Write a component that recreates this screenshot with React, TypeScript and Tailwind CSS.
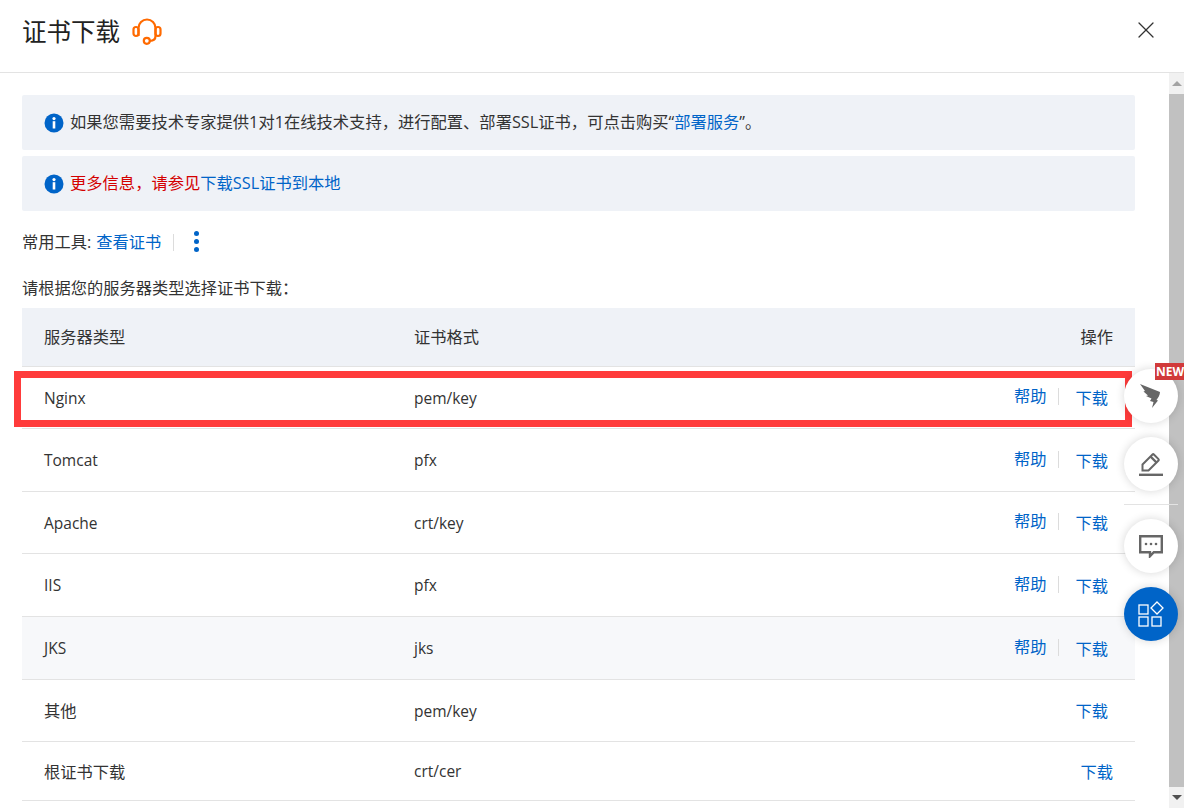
import { X } from 'lucide-react'

const rows = [
  { name: 'Nginx', format: 'pem/key', help: true, height: 'h-[62px]', nameSize: 'text-[15.5px]' },
  { name: 'Tomcat', format: 'pfx', help: true, height: 'h-[63px]', nameSize: 'text-[15.5px]' },
  { name: 'Apache', format: 'crt/key', help: true, height: 'h-[62px]', nameSize: 'text-[15.5px]' },
  { name: 'IIS', format: 'pfx', help: true, height: 'h-[63px]', nameSize: 'text-[15.5px]' },
  { name: 'JKS', format: 'jks', help: true, shaded: true, height: 'h-[63px]', nameSize: 'text-[15.5px]' },
  { name: '其他', format: 'pem/key', height: 'h-[62px]', nameSize: 'text-[16.25px]' },
  { name: '根证书下载', format: 'crt/cer', root: true, height: 'h-[59px]', nameSize: 'text-[16.25px]' },
]

function InfoIcon() {
  return (
    <svg viewBox="0 0 20 20" className="w-[20px] h-[20px] shrink-0">
      <circle cx="10" cy="10" r="9.5" fill="#0064c8" />
      <rect x="8.7" y="8.2" width="2.6" height="7.3" fill="#fff" />
      <circle cx="10" cy="5.6" r="1.6" fill="#fff" />
    </svg>
  )
}

function Headset() {
  return (
    <svg viewBox="0 0 30 28" className="w-[30px] h-[28px]" fill="none" stroke="#ff6a00" strokeWidth="2.2">
      <path d="M6.5 19V11a8.5 8.5 0 0 1 17 0v8" />
      <rect x="1.5" y="10" width="5" height="9" rx="2.5" />
      <rect x="23.5" y="10" width="5" height="9" rx="2.5" />
      <path d="M23.5 19c0 3.5-2.5 4.8-5.5 4.8" />
      <circle cx="14.8" cy="23.8" r="3" />
    </svg>
  )
}

function FloatButton({ children, className }: { children: React.ReactNode; className?: string }) {
  return (
    <div
      className={`absolute left-[1124px] w-[54px] h-[54px] rounded-full shadow-[0_0_10px_rgba(0,0,0,0.16)] flex items-center justify-center ${className}`}
    >
      {children}
    </div>
  )
}

export default function App() {
  return (
    <div
      className="relative w-[1184px] h-[808px] overflow-hidden bg-white text-[#333] text-[16.25px]"
      style={{ fontFamily: '"Open Sans", "Noto Sans CJK SC", sans-serif' }}
    >
      <header className="h-[73px] border-b border-[#e3e3e3] flex items-center pl-[22px] pr-[24px] pb-[8px]">
        <h1 className="text-[24.5px] text-[#222] font-normal leading-none">证书下载</h1>
        <span className="ml-[12px] -mt-[2px]">
          <Headset />
        </span>
        <X className="ml-auto -mt-[4px] text-[#333]" size={28} strokeWidth={1.1} />
      </header>

      <div className="flex h-[735px]">
        <main className="w-[1169px] pl-[22px] pr-[34px] pt-[22px]">
          <div className="h-[55px] rounded-[2px] bg-[#eff2f7] flex items-center px-[22px] gap-[6px]">
            <InfoIcon />
            <p className="text-[16.3px]">
              如果您需要技术专家提供1对1在线技术支持，进行配置、部署SSL证书，可点击购买“
              <span className="text-[#0064c8]">部署服务</span>”。
            </p>
          </div>
          <div className="mt-[6px] h-[55px] rounded-[2px] bg-[#eff2f7] flex items-center px-[22px] gap-[6px]">
            <InfoIcon />
            <p className="text-[16.3px]">
              <span className="text-[#d40000]">更多信息，请参见</span>
              <span className="text-[#0064c8]">下载SSL证书到本地</span>
            </p>
          </div>

          <div className="mt-[18px] h-[27px] flex items-center">
            <span>常用工具:</span>
            <span className="ml-[5px] text-[#0064c8]">查看证书</span>
            <span className="ml-[12px] w-px h-[17px] bg-[#dcdcdc]" />
            <span className="ml-[20px] flex flex-col gap-[3px] -mt-[2px]">
              <i className="block w-[5px] h-[5px] rounded-full bg-[#0064c8]" />
              <i className="block w-[5px] h-[5px] rounded-full bg-[#0064c8]" />
              <i className="block w-[5px] h-[5px] rounded-full bg-[#0064c8]" />
            </span>
          </div>

          <p className="mt-[22px] h-[21px] leading-[21px]">请根据您的服务器类型选择证书下载：</p>

          <div className="mt-[9px]">
            <div className="h-[59px] bg-[#eff2f7] border-b border-[#e3e3e3] flex items-center px-[22px]">
              <span className="w-[370px]">服务器类型</span>
              <span>证书格式</span>
              <span className="ml-auto">操作</span>
            </div>
            {rows.map((row) => (
              <div
                key={row.name}
                className={`${row.height} border-b border-[#e3e3e3] flex items-center pl-[22px] pr-[27px] pt-[2px] ${row.shaded ? 'bg-[#f7f8fa]' : ''}`}
              >
                <span className={`w-[370px] ${row.nameSize}`}>{row.name}</span>
                <span className="text-[15.5px]">{row.format}</span>
                <span className={`ml-auto flex items-center text-[#0064c8] ${row.root ? '-mr-[5px]' : ''}`}>
                  {row.help && (
                    <>
                      <span className="-mt-[4px]">帮助</span>
                      <span className="ml-[11px] mr-[17px] -mt-[4px] w-px h-[17px] bg-[#dcdcdc]" />
                    </>
                  )}
                  <span>下载</span>
                </span>
              </div>
            ))}
          </div>
        </main>

        <div className="w-[15px] bg-[#f1f1f1] flex flex-col items-center">
          <div className="h-[21px] w-full flex items-center justify-center">
            <span className="w-0 h-0 border-x-[5px] border-x-transparent border-b-[5px] border-b-[#a3a3a3]" />
          </div>
          <div className="flex-1 w-full bg-[#c1c1c1]" />
          <div className="h-[21px] w-full flex items-center justify-center">
            <span className="w-0 h-0 border-x-[5px] border-x-transparent border-t-[5px] border-t-[#505050]" />
          </div>
        </div>
      </div>

      {/* red highlight drawn over the Nginx row */}
      <div className="absolute left-[14px] top-[371px] w-[1118px] h-[56px] border-[7px] border-[#ff3b3b]" />

      <FloatButton className="top-[369px] bg-white">
        <svg viewBox="0 0 24 26" className="w-[24px] h-[26px]" fill="#666">
          <path d="M1 1 21 9c0 3-2 6-3.500 8l1.500.5L13 25l1.500-6-3.500-1 1.500-2.500L7 13l2-.5L4.500 8.500 6 8z" />
        </svg>
      </FloatButton>
      <div className="absolute left-[1155px] top-[363px] w-[29px] h-[17px] bg-[#d13a3a] text-white text-[12px] font-bold leading-[17px] pl-[1px] overflow-hidden">
        NEW
      </div>
      <FloatButton className="top-[437px] bg-white">
        <svg viewBox="0 0 24 24" className="w-[24px] h-[24px]" fill="none" stroke="#666" strokeWidth="2">
          <path d="M3.500 12.500 13.500 2.500a1 1 0 0 1 1.400 0l4.600 4.600a1 1 0 0 1 0 1.400L9.500 18.500H3.500z" />
          <path d="m11.500 4.500 6 6" strokeWidth="2.400" />
          <path d="M0 22.800h24" strokeWidth="2.400" />
        </svg>
      </FloatButton>
      <div className="absolute left-[1124px] top-[504px] w-[54px] h-px bg-[#e3e3e3]" />
      <FloatButton className="top-[519px] bg-white">
        <svg viewBox="0 0 24 23" className="w-[24px] h-[23px]" fill="none" stroke="#666" strokeWidth="2.400">
          <path d="M1.200 1.200h21.600v16h-8l-3.800 4v-4H1.200z" />
          <circle cx="7" cy="9" r="1.300" fill="#666" stroke="none" />
          <circle cx="12" cy="9" r="1.300" fill="#666" stroke="none" />
          <circle cx="17" cy="9" r="1.300" fill="#666" stroke="none" />
        </svg>
      </FloatButton>
      <FloatButton className="top-[587px] bg-[#0064c8]">
        <svg viewBox="0 0 26 26" className="w-[26px] h-[26px]" fill="none" stroke="#fff" strokeWidth="1.300">
          <rect x="1" y="4" width="9" height="9" />
          <rect x="1" y="16" width="9" height="9" />
          <rect x="14" y="16" width="9" height="9" />
          <path d="m19 1 6 6-6 6-6-6z" />
        </svg>
      </FloatButton>
    </div>
  )
}
